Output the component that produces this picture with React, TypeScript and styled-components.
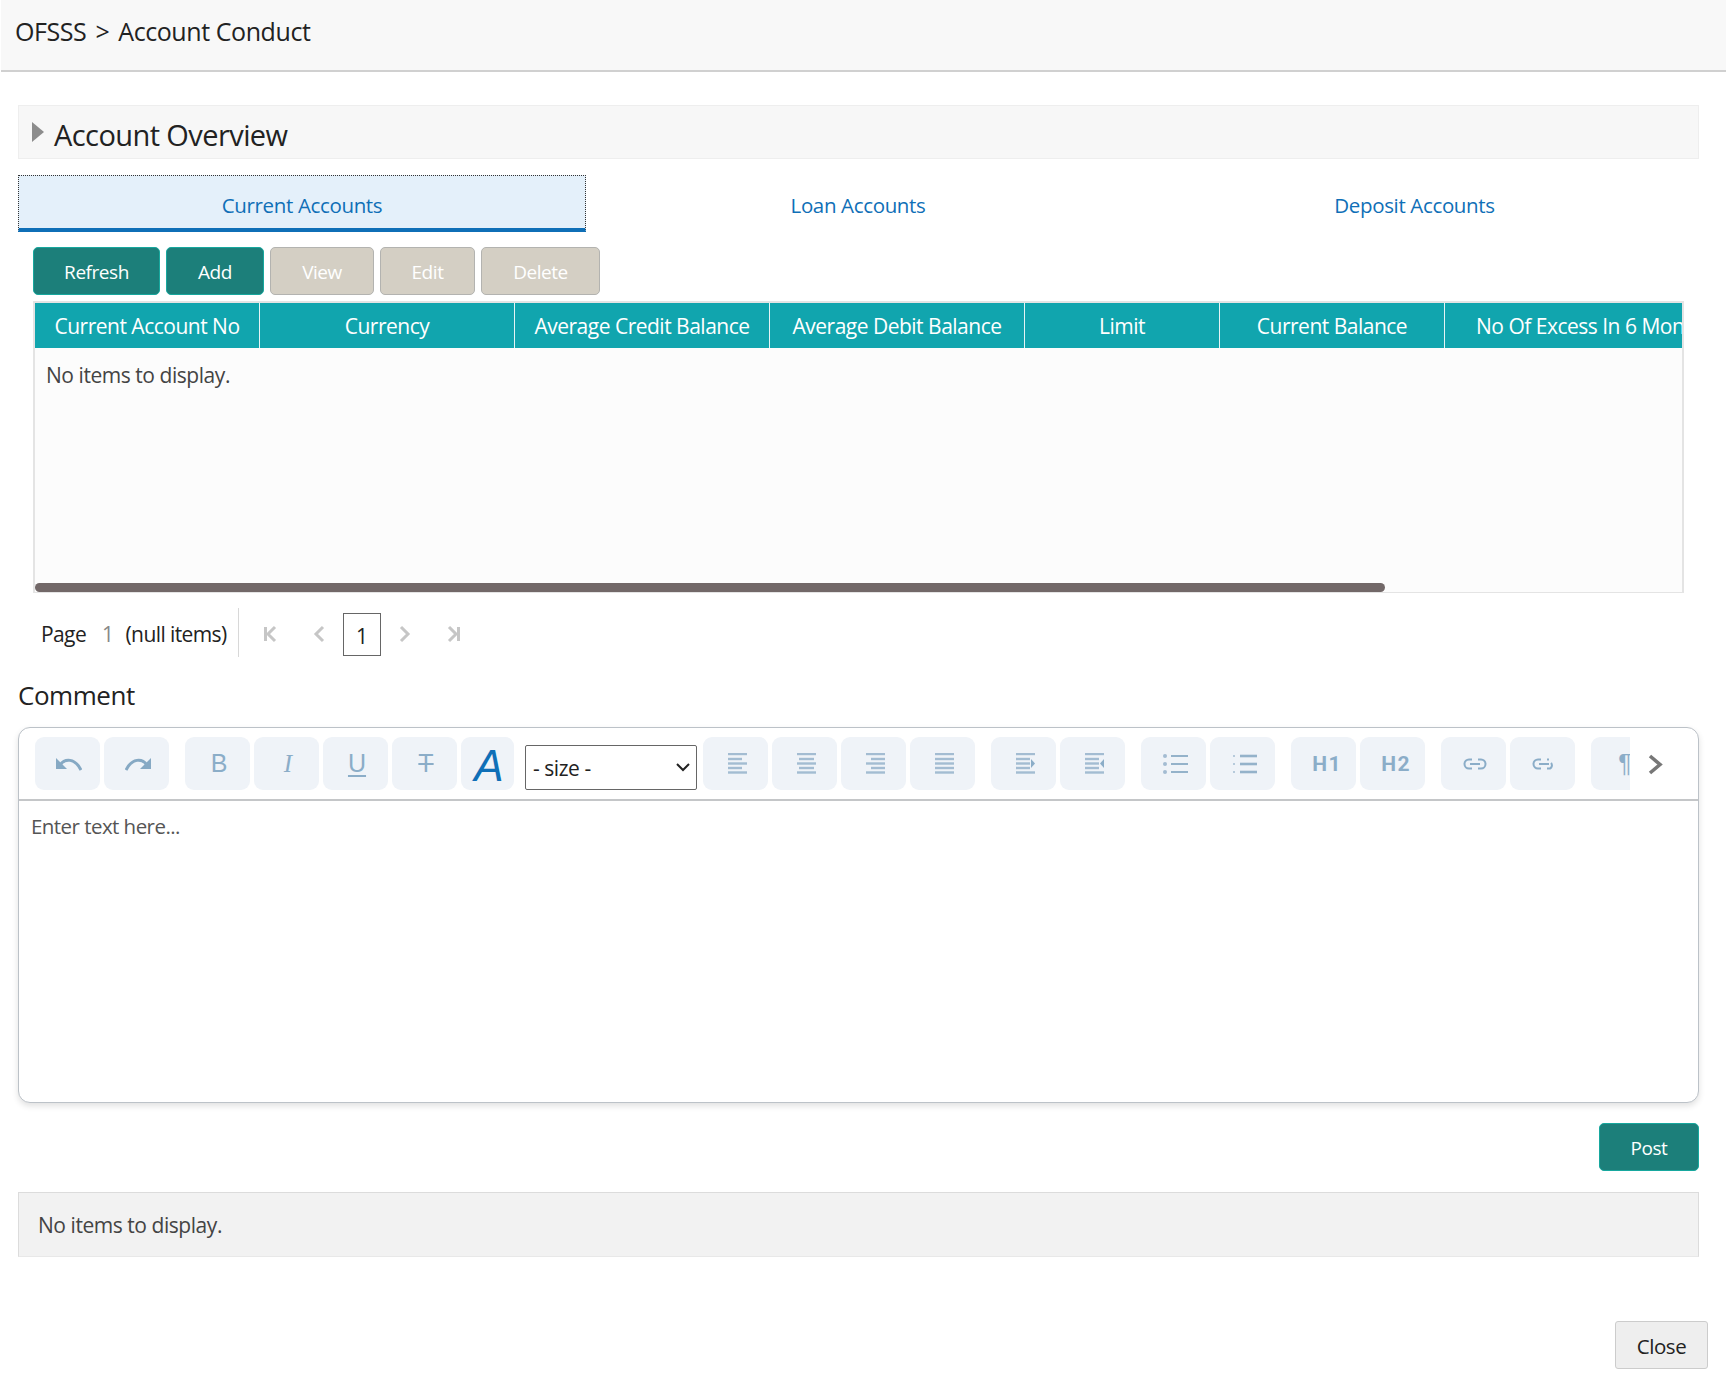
import React, { FC, ReactNode } from "react";
import styled, { createGlobalStyle } from "styled-components";

const GlobalStyle = createGlobalStyle`
  html, body {
    margin: 0;
    padding: 0;
    background: #fff;
    font-family: "Open Sans", "Noto Sans", sans-serif;
    color: #222;
  }
  * {
    box-sizing: border-box;
  }
`;

const Page = styled.div`
  width: 1726px;
  height: 1393px;
  overflow: hidden;
  display: flex;
  flex-direction: column;
`;

const TitleBar = styled.header`
  height: 72px;
  margin-left: 1px;
  padding: 0 0 8px 14px;
  display: flex;
  align-items: center;
  gap: 9px;
  background: #f8f8f8;
  border-bottom: 2px solid #d0d0d0;
  font-size: 25px;
  letter-spacing: -0.42px;
`;

const Content = styled.main`
  padding: 33px 27px 0 18px;
  display: flex;
  flex-direction: column;
`;

const OverviewBar = styled.section`
  height: 54px;
  display: flex;
  align-items: center;
  gap: 10px;
  padding: 0 0 0 13px;
  background: #f7f7f7;
  border: 1px solid #eeeeee;
  font-size: 29px;
  letter-spacing: -0.58px;
`;

const OverviewTitle = styled.span`
  padding-top: 5px;
`;

const Triangle = styled.span`
  width: 0;
  height: 0;
  border-left: 12px solid #8c8c8c;
  border-top: 10px solid transparent;
  border-bottom: 10px solid transparent;
`;

const Tabs = styled.nav`
  margin-top: 16px;
  height: 57px;
  display: grid;
  grid-template-columns: 568px 544px 1fr;
`;

const Tab = styled.div<{ $active?: boolean }>`
  display: flex;
  align-items: center;
  justify-content: center;
  padding-top: 5px;
  font-size: 20.5px;
  letter-spacing: -0.35px;
  color: #0f6fb7;
  background: ${({ $active }) => ($active ? "#e4f0fa" : "transparent")};
  border: ${({ $active }) => ($active ? "1px dotted #333" : "1px solid transparent")};
  border-bottom: 4px solid ${({ $active }) => ($active ? "#0f6fb7" : "transparent")};
`;

const Section = styled.section`
  padding-left: 15px;
`;

const ButtonRow = styled.div`
  margin-top: 15px;
  display: flex;
  gap: 6px;
`;

const ActionButton = styled.button<{ $width: number; $disabled?: boolean }>`
  width: ${({ $width }) => $width}px;
  height: 48px;
  padding: 1px 0 0;
  font: inherit;
  font-size: 19px;
  letter-spacing: -0.45px;
  color: #fff;
  border-radius: 5px;
  background: ${({ $disabled }) => ($disabled ? "#d4cfc4" : "#1c7f7a")};
  border: 1px solid ${({ $disabled }) => ($disabled ? "#b3b3b0" : "#17a89e")};
`;

const Grid = styled.div`
  margin-top: 6px;
  width: 1651px;
  height: 292px;
  display: flex;
  flex-direction: column;
  background: #fcfcfc;
  border: 2px solid #e4e4e4;
  border-bottom-width: 1px;
  overflow: hidden;
`;

const GridHead = styled.div`
  height: 45px;
  flex: none;
  display: flex;
  background: #11a5ae;
`;

const HeadCell = styled.div<{ $width: number; $clip?: boolean }>`
  flex: none;
  width: ${({ $width }) => $width}px;
  padding-top: 1px;
  display: flex;
  align-items: center;
  justify-content: ${({ $clip }) => ($clip ? "flex-start" : "center")};
  padding-left: ${({ $clip }) => ($clip ? "31px" : "0")};
  border-right: ${({ $clip }) => ($clip ? "none" : "1px solid #e6f4f5")};
  color: #fff;
  font-size: 21px;
  letter-spacing: -0.5px;
  white-space: nowrap;
  overflow: hidden;
`;

const GridBody = styled.div`
  flex: 1;
  display: flex;
  flex-direction: column;
  padding-top: 13px;
`;

const EmptyText = styled.div`
  padding-left: 11px;
  font-size: 21px;
  letter-spacing: -0.45px;
  color: #444;
`;

const ScrollThumb = styled.div`
  margin-top: auto;
  height: 9px;
  background: #726868;
  border-radius: 5px;
`;

const Pager = styled.div`
  margin-top: 15px;
  height: 49px;
  display: flex;
  align-items: center;
`;

const PagerInfo = styled.div`
  width: 206px;
  height: 100%;
  padding: 3px 0 0 8px;
  display: flex;
  align-items: center;
  border-right: 1px solid #d8d8d8;
  font-size: 21px;
  letter-spacing: -0.6px;
  white-space: nowrap;
`;

const PagerCount = styled.span`
  margin: 0 12px 0 16px;
  color: #888;
`;

const PagerSlot = styled.div`
  width: 48px;
  margin-top: 3px;
  display: flex;
  justify-content: center;
`;

const PagerSpacer = styled.div`
  width: 8px;
`;

const PagerBox = styled.div`
  width: 38px;
  height: 43px;
  margin-top: 3px;
  padding-top: 4px;
  display: flex;
  align-items: center;
  justify-content: center;
  border: 1px solid #666;
  font-size: 21px;
`;

const CommentLabel = styled.h2`
  margin: 18px 0 0 0;
  height: 52px;
  font-size: 26px;
  font-weight: 400;
  letter-spacing: -0.45px;
  line-height: 40px;
`;

const Editor = styled.div`
  height: 376px;
  background: #fff;
  border: 1px solid #bcc2c8;
  border-radius: 12px;
  box-shadow: 0 3px 6px rgba(0, 0, 0, 0.12);
  display: flex;
  flex-direction: column;
`;

const ToolbarRow = styled.div`
  height: 73px;
  flex: none;
  display: flex;
  align-items: flex-start;
  padding: 9px 0 0 16px;
  border-bottom: 2px solid #c4c6c8;
`;

const ToolbarScroll = styled.div`
  width: 1595px;
  flex: none;
  display: flex;
  overflow: hidden;
`;

const ToolGroup = styled.div<{ $tight?: boolean }>`
  flex: none;
  display: flex;
  gap: 4px;
  margin-right: ${({ $tight }) => ($tight ? "0" : "16px")};
`;

const ToolButton = styled.div<{ $narrow?: boolean }>`
  flex: none;
  width: ${({ $narrow }) => ($narrow ? "53px" : "65px")};
  height: 53px;
  padding-left: 3px;
  display: flex;
  align-items: center;
  justify-content: center;
  background: #eff3f8;
  border-radius: 9px;
  color: #8badc8;
`;

const LetterIcon = styled.span<{ $serif?: boolean; $italic?: boolean; $mark?: string }>`
  font-family: ${({ $serif }) => ($serif ? '"Liberation Serif", serif' : '"Liberation Sans", sans-serif')};
  font-size: 25px;
  line-height: 1;
  font-style: ${({ $italic }) => ($italic ? "italic" : "normal")};
  text-decoration: ${({ $mark }) => $mark || "none"};
  text-decoration-thickness: 2px;
  text-underline-offset: 3px;
`;

const HeadingIcon = styled.span`
  margin-left: 4px;
  font-family: Roboto, sans-serif;
  font-weight: 700;
  font-size: 21px;
  letter-spacing: 1.2px;
`;

const FontIcon = styled.span`
  margin-top: 5px;
  font-family: "Liberation Sans", sans-serif;
  font-style: italic;
  font-size: 44px;
  line-height: 1;
  color: #0f6fb7;
`;

const SizeSelect = styled.select`
  width: 172px;
  height: 45px;
  margin: 8px 6px 0 11px;
  padding-left: 7px;
  flex: none;
  appearance: none;
  font: inherit;
  font-size: 21px;
  letter-spacing: -0.45px;
  color: #222;
  background: #fff url("data:image/svg+xml,%3Csvg xmlns='http://www.w3.org/2000/svg' width='14' height='9'%3E%3Cpath d='M1 1l6 6 6-6' fill='none' stroke='%23222' stroke-width='2'/%3E%3C/svg%3E") no-repeat right 6px center;
  border: 1px solid #666;
  border-radius: 2px;
`;

const NextTools = styled.div`
  margin: 17px 0 0 18px;
  display: flex;
`;

const EditArea = styled.div`
  padding: 11px 12px;
  font-size: 20.5px;
  letter-spacing: -0.55px;
  color: #555;
`;

const PostRow = styled.div`
  margin-top: 20px;
  display: flex;
  justify-content: flex-end;
`;

const CommentList = styled.div`
  margin-top: 21px;
  height: 65px;
  padding: 1px 0 0 19px;
  display: flex;
  align-items: center;
  background: #f2f2f2;
  border: 1px solid #dcdcdc;
  border-bottom-color: #e8e8e8;
  font-size: 21px;
  letter-spacing: -0.45px;
  color: #444;
`;

const Footer = styled.footer`
  margin: 64px 18px 0 0;
  display: flex;
  justify-content: flex-end;
`;

const CloseButton = styled.button`
  width: 93px;
  height: 48px;
  padding: 1px 0 0;
  font: inherit;
  font-size: 20.5px;
  letter-spacing: -0.45px;
  color: #222;
  background: #eeeeee;
  border: 1px solid #cccccc;
  border-radius: 3px;
`;

const Arrow: FC<{ flip?: boolean }> = ({ flip }) => (
  <svg width="26" height="14" viewBox="0 0 26 14" style={flip ? { transform: "scaleX(-1)" } : undefined}>
    <path d="M0 1 L0 12 L11 12 Z" fill="#86a9c4" />
    <path d="M4 8 C9 1 19 1 25 13" fill="none" stroke="#86a9c4" strokeWidth="3" />
  </svg>
);

const linesFor = (kind: string): number[][] => {
  const full = [0, 19];
  const rows = [0, 5, 9.5, 14, 18.5];
  if (kind === "justify") return rows.map((y) => [...full, y]);
  if (kind === "center") return rows.map((y, i) => (i % 2 ? [2, 17, y] : [...full, y]));
  if (kind === "right") return rows.map((y, i) => (i % 2 ? [5, 19, y] : [...full, y]));
  return rows.map((y, i) => (i % 2 ? [0, 14, y] : [...full, y]));
};

const AlignIcon: FC<{ kind: string }> = ({ kind }) => (
  <svg width="19" height="21" viewBox="0 0 19 21">
    <g transform="translate(0 1)" stroke="#a3bcd2" strokeWidth="2.4">
      {linesFor(kind).map(([a, b, y]) => (
        <line key={y} x1={a} x2={b} y1={y} y2={y} />
      ))}
    </g>
  </svg>
);

const IndentIcon: FC<{ out?: boolean }> = ({ out }) => (
  <svg width="19" height="21" viewBox="0 0 19 21">
    <g transform="translate(0 1)" stroke="#a3bcd2" strokeWidth="2.4">
      <line x1="0" x2="19" y1="0" y2="0" />
      <line x1="0" x2="14" y1="5" y2="5" />
      <line x1="0" x2="14" y1="9.5" y2="9.5" />
      <line x1="0" x2="14" y1="14" y2="14" />
      <line x1="0" x2="19" y1="18.5" y2="18.5" />
    </g>
    <path d={out ? "M19 6 L15 10.5 L19 15 Z" : "M15 6 L19 10.5 L15 15 Z"} fill="#8badc8" />
  </svg>
);

const ListIcon: FC<{ numbered?: boolean }> = ({ numbered }) => (
  <svg width="25" height="20" viewBox="0 0 25 20">
    <g stroke="#94b2ca" strokeWidth={numbered ? 2.6 : 2}>
      {[2, 10, 18].map((y) => (
        <line key={y} x1="8" x2="25" y1={y} y2={y} />
      ))}
    </g>
    <g fill="#a3bcd2">
      {[2, 10, 18].map((y) => (
        <circle key={y} cx="2" cy={y} r={numbered ? 1 : 2} />
      ))}
    </g>
  </svg>
);

const LinkIcon: FC<{ broken?: boolean }> = ({ broken }) => (
  <svg width="24" height="12" viewBox="0 0 24 12" fill="none" stroke="#8badc8" strokeWidth="2">
    <path d="M9 1.5 H6 a4.5 4.5 0 0 0 0 9 H9" />
    {broken ? <path d="M17 1.5 H15 M19 5 a3.5 3.5 0 0 1 -1 5.5 H15" /> : <path d="M15 1.5 H18 a4.5 4.5 0 0 1 0 9 H15" />}
    <line x1="7" x2="17" y1="6" y2="6" />
  </svg>
);

const PagerIcon: FC<{ path: string }> = ({ path }) => (
  <svg width="16" height="18" viewBox="0 0 16 18" fill="none" stroke="#c6c6c6" strokeWidth="3">
    <path d={path} />
  </svg>
);

const columns = [
  { label: "Current Account No", width: 225 },
  { label: "Currency", width: 255 },
  { label: "Average Credit Balance", width: 255 },
  { label: "Average Debit Balance", width: 255 },
  { label: "Limit", width: 195 },
  { label: "Current Balance", width: 225 },
];

const actions = [
  { label: "Refresh", width: 127 },
  { label: "Add", width: 98 },
  { label: "View", width: 104, disabled: true },
  { label: "Edit", width: 95, disabled: true },
  { label: "Delete", width: 119, disabled: true },
];

const Tools: FC<{ items: ReactNode[] }> = ({ items }) => (
  <ToolGroup>
    {items.map((item, i) => (
      <ToolButton key={i}>{item}</ToolButton>
    ))}
  </ToolGroup>
);

export default function App() {
  return (
    <Page>
      <GlobalStyle />
      <TitleBar>
        <span>OFSSS</span>
        <span>&gt;</span>
        <span>Account Conduct</span>
      </TitleBar>
      <Content>
        <OverviewBar>
          <Triangle />
          <OverviewTitle>Account Overview</OverviewTitle>
        </OverviewBar>
        <Tabs>
          <Tab $active>Current Accounts</Tab>
          <Tab>Loan Accounts</Tab>
          <Tab>Deposit Accounts</Tab>
        </Tabs>
        <Section>
          <ButtonRow>
            {actions.map(({ label, width, disabled }) => (
              <ActionButton key={label} $width={width} $disabled={disabled}>
                {label}
              </ActionButton>
            ))}
          </ButtonRow>
          <Grid>
            <GridHead>
              {columns.map(({ label, width }) => (
                <HeadCell key={label} $width={width}>
                  {label}
                </HeadCell>
              ))}
              <HeadCell $width={237} $clip>
                No Of Excess In 6 Months
              </HeadCell>
            </GridHead>
            <GridBody>
              <EmptyText>No items to display.</EmptyText>
              <ScrollThumb style={{ width: `${Math.round(1647 * 0.8197)}px` }} />
            </GridBody>
          </Grid>
          <Pager>
            <PagerInfo>
              <span>Page</span>
              <PagerCount>1</PagerCount>
              <span>(null items)</span>
            </PagerInfo>
            <PagerSpacer />
            <PagerSlot>
              <PagerIcon path="M2.5 2 V16 M12 2 L5 9 L12 16" />
            </PagerSlot>
            <PagerSlot>
              <PagerIcon path="M12 2 L5 9 L12 16" />
            </PagerSlot>
            <PagerBox>1</PagerBox>
            <PagerSlot>
              <PagerIcon path="M4 2 L11 9 L4 16" />
            </PagerSlot>
            <PagerSlot>
              <PagerIcon path="M13.5 2 V16 M4 2 L11 9 L4 16" />
            </PagerSlot>
          </Pager>
        </Section>
        <CommentLabel>Comment</CommentLabel>
        <Editor>
          <ToolbarRow>
            <ToolbarScroll>
              <Tools items={[<Arrow key="u" />, <Arrow key="r" flip />]} />
              <ToolGroup $tight>
                <ToolButton>
                  <LetterIcon>B</LetterIcon>
                </ToolButton>
                <ToolButton>
                  <LetterIcon $serif $italic>I</LetterIcon>
                </ToolButton>
                <ToolButton>
                  <LetterIcon $mark="underline">U</LetterIcon>
                </ToolButton>
                <ToolButton>
                  <LetterIcon $mark="line-through">T</LetterIcon>
                </ToolButton>
                <ToolButton $narrow>
                  <FontIcon>A</FontIcon>
                </ToolButton>
              </ToolGroup>
              <SizeSelect defaultValue="">
                <option value="">- size -</option>
              </SizeSelect>
              <Tools
                items={["left", "center", "right", "justify"].map((kind) => (
                  <AlignIcon key={kind} kind={kind} />
                ))}
              />
              <Tools items={[<IndentIcon key="i" />, <IndentIcon key="o" out />]} />
              <Tools items={[<ListIcon key="b" />, <ListIcon key="n" numbered />]} />
              <Tools items={[<HeadingIcon key="1">H1</HeadingIcon>, <HeadingIcon key="2">H2</HeadingIcon>]} />
              <Tools items={[<LinkIcon key="l" />, <LinkIcon key="x" broken />]} />
              <Tools items={[<LetterIcon key="p">¶</LetterIcon>]} />
            </ToolbarScroll>
            <NextTools>
              <svg width="15" height="21" viewBox="0 0 15 21" fill="none" stroke="#777" strokeWidth="3.6">
                <path d="M2 2 L12 10.5 L2 19" />
              </svg>
            </NextTools>
          </ToolbarRow>
          <EditArea>Enter text here...</EditArea>
        </Editor>
        <PostRow>
          <ActionButton $width={100}>Post</ActionButton>
        </PostRow>
        <CommentList>No items to display.</CommentList>
      </Content>
      <Footer>
        <CloseButton>Close</CloseButton>
      </Footer>
    </Page>
  );
}
